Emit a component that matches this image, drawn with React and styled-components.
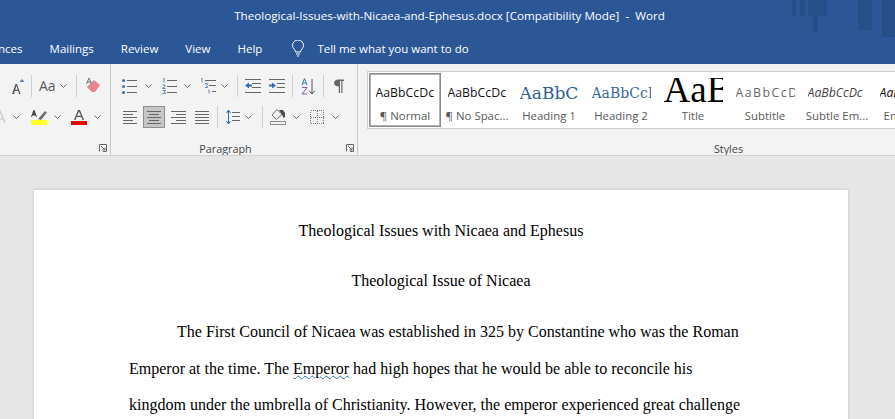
import React from "react";
import styled, { createGlobalStyle } from "styled-components";

const GlobalStyle = createGlobalStyle`
  html, body {
    margin: 0;
    padding: 0;
    height: 419px;
    overflow: hidden;
    background: #e6e6e6;
  }
`;

const Window = styled.div`
  width: 895px;
  height: 419px;
  overflow: hidden;
  display: flex;
  flex-direction: column;
  font-family: "Open Sans", "Noto Sans", sans-serif;
`;

const Header = styled.header`
  position: relative;
  height: 64px;
  flex: none;
  overflow: hidden;
  background: #2b5797;
  color: #fff;
  display: flex;
  flex-direction: column;
`;

const Decoration = styled.svg`
  position: absolute;
  top: 0;
  right: 0;
`;

const TitleBar = styled.div`
  height: 31px;
  flex: none;
  display: flex;
  align-items: center;
  justify-content: center;
  padding-left: 4px;
  font-size: 11.65px;
  white-space: pre;
`;

const Tabs = styled.nav`
  display: flex;
  align-items: center;
  height: 35px;
  flex: none;
  margin-left: -37px;
  font-size: 11.5px;
  white-space: nowrap;
`;

const Tab = styled.span`
  margin-right: ${(p) => p.$gap}px;
`;

const Ribbon = styled.div`
  height: 92px;
  flex: none;
  display: flex;
  background: #f3f3f3;
  border-bottom: 1px solid #d2d2d2;
  box-sizing: border-box;
`;

const Group = styled.section`
  width: ${(p) => p.$w}px;
  flex: none;
  box-sizing: border-box;
  display: flex;
  flex-direction: column;
  overflow: hidden;
  position: relative;
  border-right: ${(p) => (p.$last ? "none" : "1px solid #c8c8c8")};
`;

const ToolRow = styled.div`
  display: flex;
  align-items: center;
  height: 24px;
  margin-top: ${(p) => p.$top}px;
`;

const Icon = styled.svg`
  flex: none;
  display: block;
  margin-left: ${(p) => p.$l || 0}px;
`;

const Sep = styled.span`
  flex: none;
  width: 1px;
  height: 22px;
  background: #d0d0d0;
  margin-left: ${(p) => p.$l}px;
`;

const CaseLabel = styled.span`
  flex: none;
  font-size: 14px;
  color: #5a5a5a;
  width: 16px;
  margin-left: ${(p) => p.$l}px;
  line-height: 1;
`;

const ActiveButton = styled.span`
  flex: none;
  width: 22px;
  height: 22px;
  box-sizing: border-box;
  margin-left: ${(p) => p.$l}px;
  display: flex;
  align-items: center;
  justify-content: center;
  background: #c6c6c6;
  border: 1px solid #8f8f8f;
`;

const GroupFooter = styled.div`
  margin-top: auto;
  margin-bottom: -1px;
  height: 16px;
  flex: none;
  box-sizing: border-box;
  padding: 0 ${(p) => p.$right || 0}px 0 ${(p) => p.$left || 0}px;
  display: flex;
  align-items: center;
  justify-content: center;
  font-size: 10.8px;
  color: #444;
`;

const Launcher = styled.svg`
  position: absolute;
  right: 3px;
  bottom: 3px;
`;

const Gallery = styled.div`
  margin: 7px 0 0 9px;
  height: 58px;
  flex: none;
  box-sizing: border-box;
  display: flex;
  background: #fff;
  border: 1px solid #cfcfcf;
  border-right: none;
  padding: 1px;
`;

const StyleCard = styled.div`
  width: 72px;
  flex: none;
  height: 54px;
  box-sizing: border-box;
  overflow: hidden;
  display: flex;
  flex-direction: column;
  align-items: center;
  padding-top: 3px;
  border: 2px solid ${(p) => (p.$active ? "#b4b4b4" : "transparent")};
  outline: ${(p) => (p.$active ? "1px solid #8a8a8a" : "none")};
  outline-offset: -1px;
`;

const Sample = styled.div`
  width: 59px;
  height: 30px;
  flex: none;
  box-sizing: border-box;
  overflow: hidden;
  display: flex;
  align-items: center;
  padding-bottom: ${(p) => p.$lift || 0}px;
  white-space: nowrap;
  line-height: 30px;
  font-family: ${(p) => p.$font || '"Open Sans", sans-serif'};
  font-size: ${(p) => p.$size || 12.3}px;
  font-style: ${(p) => (p.$italic ? "italic" : "normal")};
  letter-spacing: ${(p) => p.$track || 0}px;
  color: ${(p) => p.$color || "#111"};
`;

const StyleName = styled.div`
  font-size: 11.4px;
  color: #595959;
  white-space: nowrap;
  line-height: 16px;
`;

const Workspace = styled.main`
  flex: 1;
  min-height: 0;
  background: #e6e6e6;
  padding: 34px 0 0 34px;
`;

const Page = styled.article`
  width: 814px;
  height: 600px;
  box-sizing: border-box;
  background: #fff;
  box-shadow: 0 0 3px rgba(0, 0, 0, 0.18);
  padding: 23px 95px 0;
  font-family: "Liberation Serif", "Times New Roman", serif;
  font-size: 16px;
  color: #000;
  line-height: 36.5px;
`;

const CenterLine = styled.p`
  margin: 0 0 13.5px;
  text-align: center;
`;

const Body = styled.p`
  margin: 0;
  padding-top: 1px;
  text-indent: 48px;
`;

const Squiggle = styled.span`
  text-decoration: underline wavy #2f6fb7 1px;
  text-underline-offset: 1px;
`;

const ic = { fill: "none", stroke: "#666", strokeWidth: 1 };

const Chevron = ({ l }) => (
  <Icon $l={l} width="7" height="4" viewBox="0 0 7 4" {...ic}>
    <path d="M.5.5 3.5 3.5 6.5.5" />
  </Icon>
);

const Lines = ({ l, w, rows }) => (
  <Icon $l={l} width={w} height="14" viewBox={`0 0 ${w} 14`} {...ic}>
    {rows.map(([x1, x2, y]) => (
      <line key={y} x1={x1} x2={x2} y1={y + 0.5} y2={y + 0.5} />
    ))}
  </Icon>
);

const Bullets = ({ l }) => (
  <Icon $l={l} width="15" height="16" viewBox="0 0 15 16" {...ic}>
    <path d="M5 2.5h10M5 8.5h10M5 14.5h10" />
    <g fill="#3f6fa8" stroke="none">
      <circle cx="1.5" cy="2.5" r="1.5" />
      <circle cx="1.5" cy="8.5" r="1.5" />
      <circle cx="1.5" cy="14.5" r="1.5" />
    </g>
  </Icon>
);

const Numbers = ({ l }) => (
  <Icon $l={l} width="15" height="16" viewBox="0 0 15 16" {...ic}>
    <path d="M5 2.5h10M5 8.5h10M5 14.5h10" />
    <path d="M1 .5 2 0v4.5M.5 7h2.5v1.5L.5 10.5h3M.5 12.5h3L2 14l1.5 1v.5h-3" stroke="#3f6fa8" strokeWidth=".8" />
  </Icon>
);

const Multilevel = ({ l }) => (
  <Icon $l={l} width="16" height="16" viewBox="0 0 16 16" {...ic}>
    <path d="M5 2.5h11M9 7.5h7M12 13.5h4" />
    <path d="M1 .5 2 0v4.5M5 5.5h2.5v1l-1.5 1 1.5 1v1h-2.5M9 11.5v4" stroke="#3f6fa8" strokeWidth=".8" />
  </Icon>
);

const IndentLess = ({ l }) => (
  <Icon $l={l} width="16" height="14" viewBox="0 0 16 14" {...ic}>
    <path d="M0 .5h16M7 4.5h9M7 8.5h9M0 13.5h16" />
    <path d="M0 6.5 4 3.5v2h3v2H4v2z" fill="#2f6fb0" stroke="none" />
  </Icon>
);

const IndentMore = ({ l }) => (
  <Icon $l={l} width="16" height="14" viewBox="0 0 16 14" {...ic}>
    <path d="M0 .5h16M8 4.5h8M8 8.5h8M0 13.5h16" />
    <path d="M7 6.5 3 3.5v2H0v2h3v2z" fill="#2f6fb0" stroke="none" />
  </Icon>
);

const Sort = ({ l }) => (
  <Icon $l={l} width="15" height="17" viewBox="0 0 15 17" {...ic}>
    <path d="M1 7 3.5 .5 6 7M1.8 5h3.4" stroke="#3f75ad" />
    <path d="M1 9.5h5L1 16h5" stroke="#8a5aa8" />
    <path d="M11 1v15M8.5 13l2.5 3 2.5-3" stroke="#555" />
  </Icon>
);

const Pilcrow = ({ l }) => (
  <Icon $l={l} width="10" height="14" viewBox="0 0 10 14">
    <path d="M4 .5h6v1.5H8.500V14h-1.200V2H6v12H4.800V7.500C2 7.500 0 6 0 4s2-3.500 4-3.500z" fill="#666" />
  </Icon>
);

const LineSpacing = ({ l }) => (
  <Icon $l={l} width="14" height="16" viewBox="0 0 14 16" {...ic}>
    <path d="M6 3.500h8M6 7.500h8M6 11.500h8" />
    <path d="M2.500 1v14M.5 4l2-3 2 3M.5 12l2 3 2-3" stroke="#2f6fb0" />
  </Icon>
);

const Shading = ({ l }) => (
  <Icon $l={l} width="16" height="16" viewBox="0 0 16 16" {...ic}>
    <path d="M.5 12.500h15v3H.5z" stroke="#8a8a8a" />
    <path d="M7 .5 2 6l4.500 4.500L12 5.500z" stroke="#6a6a6a" />
    <path d="M9 1h4l2 3v4l-1.500 1L12 5.500z" fill="#4a4a4a" stroke="none" />
  </Icon>
);

const Borders = ({ l }) => (
  <Icon $l={l} width="14" height="14" viewBox="0 0 14 14" stroke="#777" strokeWidth="1" fill="none" shapeRendering="crispEdges">
    <path d="M.5.5h13v13H.5zM7.500 .5v13M.5 7.500h13" strokeDasharray="1 1" />
  </Icon>
);

const ShrinkA = ({ l }) => (
  <Icon $l={l} width="13" height="15" viewBox="0 0 13 15">
    <path d="M0 15 3.500 5h1.500L8.500 15H7L6.200 12H2.800L2 15zM3.200 10.800h2.600L4.500 6.800z" fill="#5a5a5a" />
    <path d="M7.500 3 10 0l2.500 3z" fill="#5a7fa8" />
  </Icon>
);

const Eraser = ({ l }) => (
  <Icon $l={l} width="15" height="16" viewBox="0 0 15 16">
    <path d="M6 15 .8 10 8 3l6 5-5 7z" fill="#e8848c" transform="translate(0 -1)" />
    <path d="M0 6 2.500 0h1L6 6H5L4.400 4.500H1.600L1 6zM2 3.500h2L3 1z" fill="#6a6a6a" />
  </Icon>
);

const GhostA = ({ l }) => (
  <Icon $l={l} width="12" height="14" viewBox="0 0 12 14" fill="none" stroke="#c4c4c4" strokeWidth="1.200">
    <path d="M1 13 6 1l5 12M3 9h6" />
  </Icon>
);

const Highlighter = ({ l }) => (
  <Icon $l={l} width="16" height="16" viewBox="0 0 16 16">
    <rect y="11" width="16" height="5" fill="#ffff21" />
    <path d="M7 10 14 2l2 1.500-6 7.500z" fill="#6f6f6f" />
    <path d="M0 8 2.500 1h1L6 8H5L4.400 6.500H1.600L1 8z" fill="#444" />
  </Icon>
);

const FontColor = ({ l }) => (
  <Icon $l={l} width="16" height="15" viewBox="0 0 16 15">
    <rect y="11" width="16" height="4" fill="#e60000" />
    <path d="M3 10 7 0h2l4 10h-1.500L10.400 7H5.600L4.500 10zM6 5.800h4L8 1.500z" fill="#555" />
  </Icon>
);

const Bulb = () => (
  <Icon $l={0} width="12" height="17" viewBox="0 0 12 17" fill="none" stroke="#fff" strokeWidth="1">
    <path d="M3.500 12c0-2.500-3-3.500-3-6.500a5.500 5.500 0 0 1 11 0c0 3-3 4-3 6.500zM4 14h4M5 16h2" />
  </Icon>
);

const DialogLauncher = () => (
  <Launcher width="8" height="8" viewBox="0 0 8 8" fill="none" stroke="#666">
    <path d="M.5 7.500V.5h7v7H4M2 2l4 4M6 3.500V6H3.500" />
  </Launcher>
);

const alignLeft = [[0, 14, 1], [0, 10, 4], [0, 14, 7], [0, 10, 10], [0, 14, 13]];
const alignCenter = [[1, 15, 1], [3, 13, 4], [1, 15, 7], [3, 13, 10], [1, 15, 13]];
const alignRight = [[0, 15, 1], [5, 15, 4], [0, 15, 7], [5, 15, 10], [0, 15, 13]];
const justify = [[0, 14, 1], [0, 14, 4], [0, 14, 7], [0, 14, 10], [0, 14, 13]];

const styleCards = [
  { name: "¶ Normal", active: true },
  { name: "¶ No Spac..." },
  { name: "Heading 1", font: '"DejaVu Serif", serif', size: 17, color: "#2e5f8f" },
  { name: "Heading 2", font: '"DejaVu Serif", serif', size: 14, color: "#3a6a9a" },
  { name: "Title", font: '"Liberation Serif", serif', size: 37, color: "#000", text: "AaB", lift: 6 },
  { name: "Subtitle", color: "#666", track: 1.5, text: "AaBbCcD" },
  { name: "Subtle Em...", italic: true, color: "#444" },
  { name: "Emphasis", italic: true, color: "#111" },
];

const App = () => (
  <Window>
    <GlobalStyle />
    <Header>
      <Decoration width="103" height="40" viewBox="0 0 103 40" fill="#24497f" opacity=".6">
        <path d="M0 0h4v16H0zM8 0h5v16H8zM16 0h5v16h-5zM21 0h5v32h-5zM26 0h9v16h-9zM66 0h14v30H66zM90 0h13v37H90z" />
      </Decoration>
      <TitleBar>Theological-Issues-with-Nicaea-and-Ephesus.docx [Compatibility Mode]  -  Word</TitleBar>
      <Tabs>
        <Tab $gap={27}>References</Tab>
        <Tab $gap={27}>Mailings</Tab>
        <Tab $gap={27}>Review</Tab>
        <Tab $gap={27}>View</Tab>
        <Tab $gap={30}>Help</Tab>
        <Tab $gap={13}>
          <Bulb />
        </Tab>
        <Tab $gap={0}>Tell me what you want to do</Tab>
      </Tabs>
    </Header>
    <Ribbon>
      <Group $w={111}>
        <ToolRow $top={10}>
          <ShrinkA l={12} />
          <Sep $l={6} />
          <CaseLabel $l={7}>Aa</CaseLabel>
          <Chevron l={5} />
          <Sep $l={9} />
          <Eraser l={9} />
        </ToolRow>
        <ToolRow $top={7}>
          <GhostA l={-6} />
          <Chevron l={7} />
          <Highlighter l={11} />
          <Chevron l={7} />
          <FontColor l={10} />
          <Chevron l={7} />
        </ToolRow>
        <GroupFooter>
          <DialogLauncher />
        </GroupFooter>
      </Group>
      <Group $w={247}>
        <ToolRow $top={10}>
          <Bullets l={11} />
          <Chevron l={8} />
          <Numbers l={10} />
          <Chevron l={7} />
          <Multilevel l={9} />
          <Chevron l={5} />
          <Sep $l={9} />
          <IndentLess l={7} />
          <IndentMore l={8} />
          <Sep $l={7} />
          <Sort l={8} />
          <Sep $l={7} />
          <Pilcrow l={10} />
        </ToolRow>
        <ToolRow $top={7}>
          <Lines l={12} w={14} rows={alignLeft} />
          <ActiveButton $l={6}>
            <Lines w={16} rows={alignCenter} />
          </ActiveButton>
          <Lines l={6} w={15} rows={alignRight} />
          <Lines l={9} w={14} rows={justify} />
          <Sep $l={8} />
          <LineSpacing l={8} />
          <Chevron l={5} />
          <Sep $l={10} />
          <Shading l={7} />
          <Chevron l={7} />
          <Borders l={10} />
          <Chevron l={8} />
        </ToolRow>
        <GroupFooter $right={17}>
          Paragraph
          <DialogLauncher />
        </GroupFooter>
      </Group>
      <Group $w={537} $last>
        <Gallery>
          {styleCards.map((card) => (
            <StyleCard key={card.name} $active={card.active}>
              <Sample
                $font={card.font}
                $size={card.size}
                $color={card.color}
                $italic={card.italic}
                $track={card.track}
                $lift={card.lift}
              >
                {card.text || "AaBbCcDc"}
              </Sample>
              <StyleName>{card.name}</StyleName>
            </StyleCard>
          ))}
        </Gallery>
        <GroupFooter $left={204}>Styles</GroupFooter>
      </Group>
    </Ribbon>
    <Workspace>
      <Page>
        <CenterLine>Theological Issues with Nicaea and Ephesus</CenterLine>
        <CenterLine>Theological Issue of Nicaea</CenterLine>
        <Body>
          The First Council of Nicaea was established in 325 by Constantine who was the Roman Emperor at the time. The{" "}
          <Squiggle>Emperor</Squiggle> had high hopes that he would be able to reconcile his kingdom under the umbrella
          of Christianity. However, the emperor experienced great challenge
        </Body>
      </Page>
    </Workspace>
  </Window>
);

export default App;
